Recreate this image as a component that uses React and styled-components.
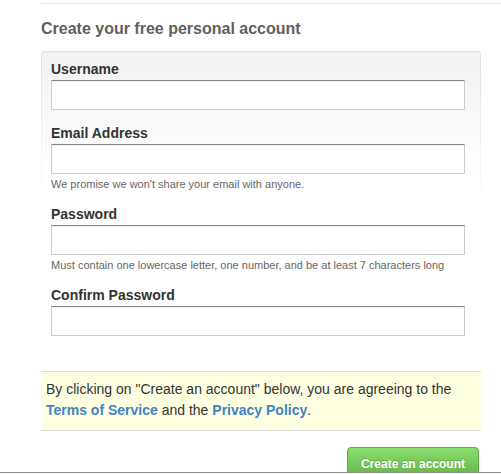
import React from "react";
import styled, { createGlobalStyle } from "styled-components";

const GlobalStyle = createGlobalStyle`
  html, body {
    margin: 0;
    padding: 0;
    background: #fff;
  }
  body {
    font-family: "Liberation Sans", Arial, Helvetica, sans-serif;
    color: #333;
  }
`;

const Page = styled.div`
  width: 501px;
  height: 474px;
  overflow: hidden;
  padding-left: 41px;
  box-sizing: border-box;
`;

const TopRule = styled.div`
  margin-top: 3px;
  border-top: 1px solid #e5e5e5;
`;

const Heading = styled.h2`
  margin: 15px 0 0;
  font-size: 16px;
  line-height: 20px;
  font-weight: bold;
  color: #5f5f5f;
`;

const Panel = styled.div`
  margin-top: 12px;
  width: 440px;
  box-sizing: border-box;
  padding: 8px 0 20px 9px;
  border: 1px solid transparent;
  border-radius: 4px;
  background: linear-gradient(#f2f2f2, #fff 130px) padding-box,
    linear-gradient(#e0e0e0, rgba(255, 255, 255, 0) 160px) border-box;
`;

const Field = styled.div`
  & + & {
    margin-top: 14px;
  }
`;

const Label = styled.label`
  display: block;
  margin-bottom: 2px;
  font-size: 14px;
  line-height: 18px;
  font-weight: bold;
  color: #333;
`;

const Input = styled.input`
  display: block;
  width: 414px;
  height: 30px;
  box-sizing: border-box;
  margin: 0;
  padding: 4px 6px;
  border: 1px solid #ccc;
  border-top-color: #888;
  border-radius: 0;
  background: #fff;
  box-shadow: inset 0 1px 1px rgba(0, 0, 0, 0.08);
  font-family: inherit;
  font-size: 14px;
  outline: none;
`;

const Hint = styled.p`
  margin: 3px 0 0;
  font-size: 11px;
  line-height: 14px;
  color: #666;
`;

const Notice = styled.div`
  margin-top: 14px;
  width: 440px;
  box-sizing: border-box;
  padding: 7px 5px 9px;
  background: #ffffe2;
  border-top: 1px solid #ddd;
  border-bottom: 1px solid #ddd;
  font-size: 14px;
  line-height: 21px;
  color: #333;
`;

const Link = styled.a`
  color: #4183c4;
  font-weight: bold;
  text-decoration: none;
`;

const Actions = styled.div`
  margin: 16px 0 0 -41px;
  height: 25px;
  overflow: hidden;
  display: flex;
  align-items: flex-start;
  justify-content: flex-end;
  padding-right: 22px;
  border-bottom: 1px solid #8a8a8a;
`;

const Button = styled.button`
  flex: none;
  display: block;
  margin: 0;
  padding: 8px 13px 9px;
  box-sizing: border-box;
  border: 1px solid #5ca941;
  border-radius: 4px;
  background: linear-gradient(#8add6d, #60b044);
  color: #fff;
  font-family: inherit;
  font-size: 12px;
  line-height: 16px;
  font-weight: bold;
  text-shadow: 0 -1px 0 rgba(0, 0, 0, 0.2);
  cursor: pointer;
`;

const fields = [
  { id: "username", label: "Username", type: "text" },
  {
    id: "email",
    label: "Email Address",
    type: "text",
    hint: "We promise we won't share your email with anyone.",
  },
  {
    id: "password",
    label: "Password",
    type: "password",
    hint: "Must contain one lowercase letter, one number, and be at least 7 characters long",
  },
  { id: "confirm", label: "Confirm Password", type: "password" },
];

export default function App() {
  return (
    <Page>
      <GlobalStyle />
      <TopRule />
      <Heading>Create your free personal account</Heading>
      <Panel>
        {fields.map((f) => (
          <Field key={f.id}>
            <Label htmlFor={f.id}>{f.label}</Label>
            <Input id={f.id} type={f.type} />
            {f.hint && <Hint>{f.hint}</Hint>}
          </Field>
        ))}
      </Panel>
      <Notice>
        By clicking on "Create an account" below, you are agreeing to the{" "}
        <Link href="#">Terms of Service</Link> and the{" "}
        <Link href="#">Privacy Policy</Link>.
      </Notice>
      <Actions>
        <Button type="button">Create an account</Button>
      </Actions>
    </Page>
  );
}
